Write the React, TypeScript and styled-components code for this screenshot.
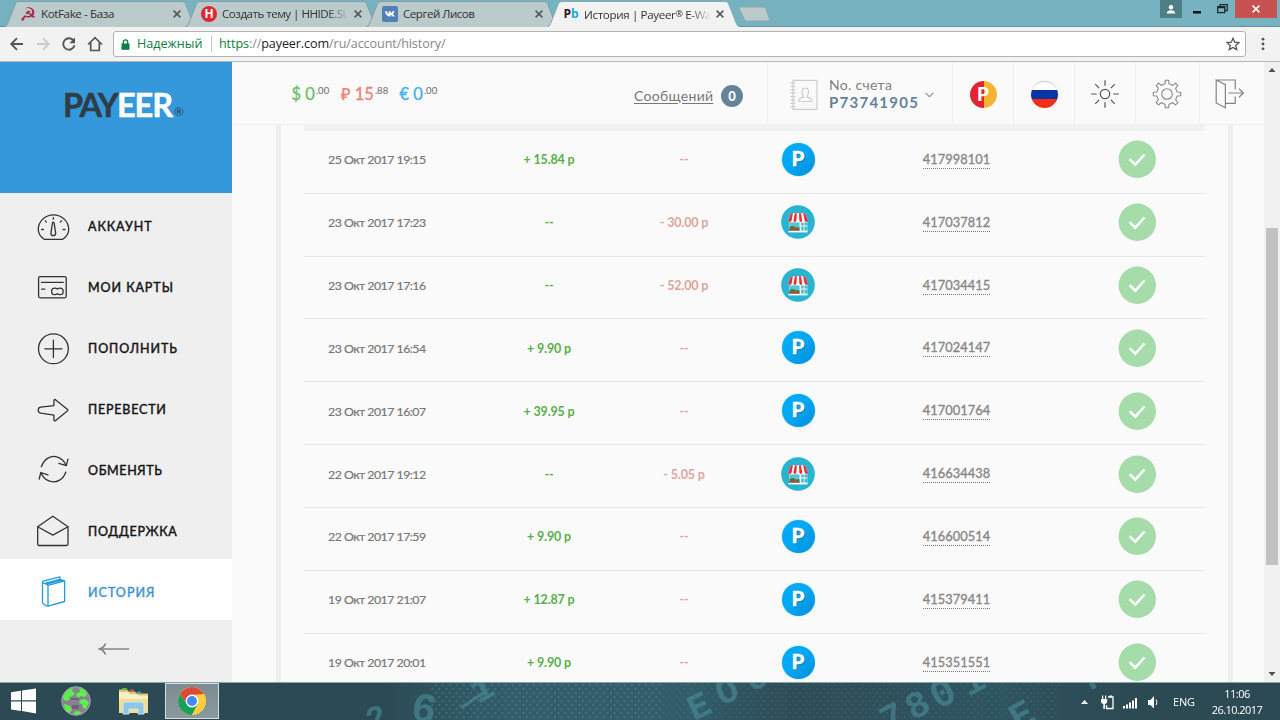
import type { ReactNode } from 'react';
import styled, { createGlobalStyle } from 'styled-components';

const GlobalStyle = createGlobalStyle`
  * { box-sizing: border-box; }
  html, body { margin: 0; padding: 0; overflow: hidden; }
  body { width: 1280px; height: 720px; background: #fafafa; }
  svg { display: block; flex: none; }
`;

const uiFont = `'Open Sans', 'Noto Sans', sans-serif`;
const siteFont = `'Lato', 'Open Sans', sans-serif`;

const Screen = styled.div`
  width: 1280px;
  height: 720px;
  display: flex;
  flex-direction: column;
  overflow: hidden;
  font-family: ${siteFont};
`;

/* ---------- browser ---------- */

const TabStrip = styled.div`
  height: 27px;
  flex: none;
  display: flex;
  align-items: flex-start;
  padding-left: 4px;
  background: #76b2c0;
  border-bottom: 1px solid #68909a;
`;

const TabBox = styled.div<{ $active?: boolean }>`
  position: relative;
  z-index: ${({ $active }) => ($active ? 2 : 1)};
  width: 193px;
  height: 27px;
  flex: none;
  margin-right: -12px;
  padding: 1px 0 0 16px;
  display: flex;
  align-items: center;
`;

const TabShape = styled.svg`
  position: absolute;
  left: 0;
  top: 0;
  z-index: -1;
`;

const TabTitle = styled.span<{ $faded?: boolean; $spacing: number }>`
  width: 126px;
  margin: 0 6px 0 5px;
  white-space: nowrap;
  font: 11.6px/16px ${uiFont};
  letter-spacing: ${({ $spacing }) => $spacing}px;
  color: #333;
  ${({ $faded }) => $faded && 'mask-image: linear-gradient(to right, #000 84%, transparent 101%);'}
`;

const TabMark = styled.span`
  font-size: 9px;
  vertical-align: 2px;
`;

const Favicon = styled.span<{ $color?: string; $bg?: string; $radius?: string; $size?: number }>`
  width: 16px;
  height: 16px;
  flex: none;
  display: flex;
  align-items: center;
  justify-content: center;
  font: bold ${({ $size = 12 }) => $size}px/16px 'Open Sans', 'DejaVu Sans', sans-serif;
  color: ${({ $color = '#fff' }) => $color};
  background: ${({ $bg = 'transparent' }) => $bg};
  border-radius: ${({ $radius = '0' }) => $radius};
`;

const PbBlue = styled.span`
  color: #1ea5dc;
`;

const NewTab = styled.svg`
  margin: 6px 0 0 10px;
`;

const WindowButtons = styled.div`
  margin-left: auto;
  margin-right: 3px;
  display: flex;
  align-items: flex-start;
`;

const WindowButton = styled.div<{ $width: number; $bg?: string }>`
  width: ${({ $width }) => $width}px;
  height: 18px;
  display: flex;
  align-items: center;
  justify-content: center;
  background: ${({ $bg = 'transparent' }) => $bg};
`;

const Toolbar = styled.div`
  height: 35px;
  flex: none;
  display: flex;
  align-items: center;
  background: #f2f2f2;
  border-bottom: 1px solid #b6b4b6;
`;

const NavButtons = styled.div`
  width: 113px;
  flex: none;
  padding-left: 9px;
  display: flex;
  gap: 10px;
`;

const AddressBar = styled.div`
  width: 1133px;
  height: 26px;
  flex: none;
  display: flex;
  align-items: center;
  padding: 0 5px 0 7px;
  background: #fff;
  border: 1px solid #b4b2b2;
  border-radius: 3px;
  font: 12.6px/18px ${uiFont};
  color: #888;
`;

const Secure = styled.span`
  width: 75px;
  margin-left: 7px;
  color: #0b8043;
  border-right: 1px solid #c4c4c4;
  height: 16px;
  line-height: 16px;
`;

const Url = styled.span`
  margin-left: 7px;
  margin-right: auto;
  letter-spacing: -0.1px;
`;

const UrlPart = styled.span<{ $color: string }>`
  color: ${({ $color }) => $color};
`;

const MenuDots = styled.svg`
  margin-left: 13px;
`;

/* ---------- site ---------- */

const Page = styled.div`
  height: 620px;
  flex: none;
  display: flex;
  background: #fafafa;
`;

const Sidebar = styled.aside`
  width: 231.5px;
  flex: none;
  background: #efefef;
`;

const Brand = styled.div`
  height: 131px;
  padding: 23px 0 0 63px;
  display: flex;
  background: #3498db;
`;

const BrandPart = styled.span<{ $color: string; $spacing: number }>`
  color: ${({ $color }) => $color};
  font: bold 32.5px/40px ${siteFont};
  -webkit-text-stroke: 0.5px;
  letter-spacing: ${({ $spacing }) => $spacing}px;
`;

const Registered = styled.span`
  margin: 20px 0 0 2px;
  font: 12px/14px ${siteFont};
  color: #2c3e50;
`;

const NavItem = styled.a<{ $active?: boolean }>`
  height: 61px;
  padding: 5px 0 0 36px;
  display: flex;
  align-items: center;
  background: ${({ $active }) => ($active ? '#fff' : 'transparent')};
  color: ${({ $active }) => ($active ? '#3d94d4' : '#151515')};
`;

const NavLabel = styled.span<{ $spacing: number }>`
  margin: 2px 0 0 18px;
  font: 12.5px/18px ${siteFont};
  -webkit-text-stroke: 0.45px;
  letter-spacing: ${({ $spacing }) => $spacing}px;
`;

const Collapse = styled.div`
  height: 58px;
  display: flex;
  align-items: center;
  justify-content: center;
  padding-right: 3px;
`;

const Main = styled.main`
  width: 1032.5px;
  flex: none;
  display: flex;
  flex-direction: column;
  overflow: hidden;
`;

const Header = styled.header`
  height: 63px;
  flex: none;
  display: flex;
  border-bottom: 1px solid #f0f0f0;
`;

const Balances = styled.div`
  width: 401.5px;
  flex: none;
  padding: 20px 0 0 60px;
  display: flex;
`;

const Balance = styled.div<{ $color: string; $width: number }>`
  width: ${({ $width }) => $width}px;
  flex: none;
  display: flex;
  white-space: nowrap;
  font: 16.5px/24px ${siteFont};
  -webkit-text-stroke: 0.35px;
  color: ${({ $color }) => $color};
`;

const Cents = styled.span`
  margin: -3px 0 0 1px;
  font-size: 9.5px;
  -webkit-text-stroke: 0.1px;
  color: #777;
`;

const Messages = styled.div`
  width: 134px;
  flex: none;
  padding: 5px 0 0 1px;
  display: flex;
  align-items: center;
`;

const MessagesLink = styled.a`
  width: 87px;
  font: 14px/20px ${siteFont};
  letter-spacing: 0.3px;
  color: #777;
  text-decoration: underline;
  text-underline-offset: 2px;
`;

const Badge = styled.span`
  width: 22px;
  height: 22px;
  border-radius: 50%;
  background: #648499;
  color: #fff;
  font: 900 13px/22px ${siteFont};
  text-align: center;
`;

const HeaderCell = styled.div<{ $width: number; $shift?: number }>`
  width: ${({ $width }) => $width}px;
  flex: none;
  border-left: 1px solid #efefef;
  display: flex;
  align-items: center;
  justify-content: center;
  padding: 2px ${({ $shift = 0 }) => $shift}px 0 0;
`;

const AccountCell = styled.div`
  width: 185px;
  flex: none;
  padding: 4px 0 0 22px;
  border-left: 1px solid #efefef;
  display: flex;
  align-items: center;
`;

const AccountText = styled.div`
  width: 96px;
  margin: -3px 0 0 11px;
  display: flex;
  flex-direction: column;
`;

const AccountLabel = styled.span`
  font: 14px/17px ${siteFont};
  letter-spacing: 0.3px;
  color: #7f7f7f;
`;

const AccountNumber = styled.span`
  font: bold 15px/18px ${siteFont};
  letter-spacing: 1.25px;
  color: #64839b;
`;

const Coin = styled.div`
  width: 27px;
  height: 27px;
  border-radius: 50%;
  background: linear-gradient(to right, #e32430 50%, #f9b233 50%);
  color: #fff;
  font: 900 19px/26px ${siteFont};
  text-align: center;
`;

const Flag = styled.div`
  width: 27px;
  height: 27px;
  border-radius: 50%;
  border-top: 1px solid #d0d0d0;
  background: linear-gradient(#fff 31%, #0736a4 31% 65%, #f52b18 65%);
  box-shadow: 0 0 1px #c8c8c8;
`;

const HistoryPanel = styled.section`
  width: 957px;
  height: 557px;
  flex: none;
  margin-left: 44.5px;
  padding: 0 23px;
  border: solid #efefef;
  border-width: 0 5px;
  overflow: hidden;
`;

const TableHead = styled.div`
  height: 6px;
  background: #f0f3f2;
`;

const Row = styled.div`
  height: 62.83px;
  display: grid;
  grid-template-columns: 177.5px 135px 135px 93px 224px 136.5px;
  align-items: center;
  padding-bottom: 5px;
  border-bottom: 1px solid #e3e6e6;
`;

const Time = styled.span`
  padding: 2px 0 0 24px;
  font: 12.3px/18px ${siteFont};
  letter-spacing: -0.5px;
  -webkit-text-stroke: 0.2px;
  color: #777;
`;

const Amount = styled.span<{ $kind: 'in' | 'out' }>`
  padding-top: 2px;
  text-align: center;
  font: bold 12.5px/18px ${siteFont};
  letter-spacing: -0.15px;
  color: ${({ $kind }) => ($kind === 'in' ? '#58b04b' : '#dfa49b')};
`;

const Center = styled.span`
  display: flex;
  justify-content: center;
`;

const Operation = styled.span`
  width: 33px;
  height: 33px;
  border-radius: 50%;
  background: linear-gradient(135deg, #03a9f4 45%, #0398e4 75%);
  box-shadow: 0 0 1px #03a9f4;
  color: #fff;
  font: 900 20.5px/31px ${siteFont};
  -webkit-text-stroke: 0.3px;
  text-align: center;
  text-shadow: 1px 1px 1px #087cba;
`;

const Id = styled.a`
  margin-top: 1px;
  font: 12.8px/17px ${siteFont};
  -webkit-text-stroke: 0.35px;
  letter-spacing: 0.1px;
  color: #888;
  border-bottom: 1px dotted #777;
`;

const Scrollbar = styled.div`
  width: 16px;
  flex: none;
  display: flex;
  flex-direction: column;
  align-items: center;
  background: #f1f1f1;
`;

const ScrollTrack = styled.div`
  flex: 1;
  padding-top: 149px;
`;

const ScrollThumb = styled.div`
  width: 12px;
  height: 337px;
  background: #c1c1c1;
`;

/* ---------- taskbar ---------- */

const Taskbar = styled.footer`
  position: relative;
  z-index: 0;
  height: 38px;
  flex: none;
  display: flex;
  background: #2c4a54;
  border-top: 1px solid #86a5a8;
  overflow: hidden;
`;

const Wallpaper = styled.svg`
  position: absolute;
  left: 0;
  top: 0;
  z-index: -1;
`;

const TaskButton = styled.div<{ $width: number; $active?: boolean; $shift?: number }>`
  width: ${({ $width }) => $width}px;
  height: 36px;
  display: flex;
  align-items: center;
  justify-content: center;
  padding-right: ${({ $shift = 0 }) => $shift}px;
  border: 1px solid ${({ $active }) => ($active ? '#d9dfe1' : 'transparent')};
  background: ${({ $active }) => ($active ? 'linear-gradient(#7d8c92, #8b999c)' : 'transparent')};
`;

const Tray = styled.div`
  margin-left: auto;
  display: flex;
  align-items: center;
  color: #fff;
  font: 11px/16px ${uiFont};
`;

const Language = styled.span`
  width: 36px;
  margin-left: 15px;
  letter-spacing: -0.2px;
`;

const Clock = styled.div`
  width: 56px;
  margin-right: 15px;
  text-align: center;
  letter-spacing: -0.55px;
`;

/* ---------- icons ---------- */

const Cross = ({ color = '#555', size = 8 }: { color?: string; size?: number }) => (
  <svg width={size} height={size} viewBox="0 0 8 8" stroke={color} strokeWidth="1.5">
    <path d="M.6.6 7.4 7.4M7.4.6.6 7.4" />
  </svg>
);

const navIcons: Record<string, ReactNode> = {
  account: (
    <>
      <path d="M8.3 31.3C4.4 28.8 2.3 25.4 2.3 21.6a15.2 14.8 0 0 1 30.4 0c0 3.8-2.1 7.2-6 9.7z" />
      <path d="M16.5 14.8q.8-1.2 1.6 0l1.6 10.5q-.3 2.4-2.4 2.4t-2.4-2.4z" />
      <path d="M17.3 9.6v1.6M9.3 13l1.1 1.1M25.3 13l-1.1 1.1M5.6 21.5h1.8M27.2 21.5H29" />
    </>
  ),
  cards: (
    <>
      <rect x="2.6" y="7.6" width="27.6" height="21.2" rx="1.5" />
      <path d="M5.5 13.4h21.8M5.6 20.2h3.2M21.4 20.1q-1-.9-2.6-.9-3.2 0-3.2 3.2t3.2 3.2q1.600 0 2.600-.9 1 .9 2.600.9 3.200 0 3.200-3.200t-3.200-3.200q-1.600 0-2.600.9z" />
    </>
  ),
  deposit: (
    <>
      <circle cx="17.4" cy="18.8" r="14.9" />
      <path d="M17.4 10.2v17.2M8.8 18.8H26" />
    </>
  ),
  transfer: (
    <path d="M4.8 16.1 17.9 14.6V9.8q.2-2 1.8-.9l11.900 9.600q.6.6 0 1.200l-11.900 9.700q-1.600 1.100-1.800-.7v-4.600L4.800 22.200Q2.200 21.600 2.200 19t2.600-2.900z" />
  ),
  exchange: (
    <>
      <path d="M5.4 14.7C8.2 6.6 15 3.2 20.8 4.8c4.6 1.2 7.6 4.2 9.5 8.9M32 7.2l-1.7 6.5-7.4-2.4" />
      <path d="M29.7 20.2c-2.800 8-9.600 10.600-15.400 9.200-4.600-1.200-7.600-4.200-9.500-8.900M3.200 27l1.600-6.500 7.200 2.300" />
    </>
  ),
  support: (
    <>
      <path d="M1.7 13.7 16.8 3.2 32 13.7V31q0 1.5-1.5 1.5H3.2q-1.5 0-1.5-1.5z" />
      <path d="m1.7 13.7 15.1 8.4L32 13.7" />
    </>
  ),
  history: (
    <path d="m12 11.3 16.6-4.500v20.700L12 32.200zM12 11.300q-2.500-2-5.500-2.400v20q2 2.700 5.500 3.300M6.500 8.900q-.5-1.600 1.400-2.100l16-4v2.600l4.700 1.400M8.600 9.300l15.100-4M10.400 10.200l15.500-4.100" />
  ),
};

const NavIcon = ({ name }: { name: string }) => (
  <svg width="34" height="36" viewBox="0 0 34 36" fill="none" stroke={name === 'history' ? '#239bdd' : '#333'} strokeWidth="1.3" strokeLinejoin="round" strokeLinecap="round">
    {navIcons[name]}
  </svg>
);

const ShopIcon = () => (
  <svg width="34" height="34" viewBox="0 0 34 34">
    <circle cx="17" cy="17" r="16.8" fill="#27b5d2" />
    <path d="M8.3 15h18v11h-18z" fill="#f5f7f7" />
    <path d="M7.4 26h19.2v1.4H7.400z" fill="#fff" />
    <path d="M8.500 17.400h10v7h-10z" fill="#58c4d6" />
    <path d="M8.500 22.200q3-2.600 6 0h4v2.400h-10z" fill="#497f43" />
    <path d="M8.200 24h10.400v1.800H8.200z" fill="#a44d3b" />
    <path d="M20.200 17.600h2.500v3h-2.500zM23.500 17.600H26v3h-2.500zM20.200 21.400h2.500v4h-2.500zM23.500 21.400H26v4h-2.500z" fill="#42bdd5" />
    <path d="M10 8.300h14l3 7q-.3 1.700-1.900 1.700H9q-1.700 0-1.900-1.700z" fill="#fff" />
    <path d="M10 8.300h1.900l-1.200 7q-.3 1.700-1.800 1.700t-1.800-1.700zM13.800 8.300h2l-.3 7q-.2 1.700-1.700 1.700t-1.300-1.700zM18 8.300h2l1.200 7q0 1.700-1.300 1.700t-1.600-1.700zM22.100 8.300H24l3 7q0 1.700-1.500 1.700t-1.900-1.700z" fill="#e6333a" />
  </svg>
);

const StatusIcon = () => (
  <svg width="38" height="38" viewBox="0 0 38 38">
    <circle cx="19.300" cy="19.300" r="18.700" fill="#a5dcaa" />
    <path d="m11.600 19.200 5.700 5.400 9.200-10.100" fill="none" stroke="#fff" strokeWidth="2.500" />
  </svg>
);

const SunIcon = () => (
  <svg width="30" height="30" viewBox="0 0 30 30" fill="none" stroke="#555" strokeWidth="1.2">
    <circle cx="15" cy="15" r="4.7" />
    <path d="M15 1.200v5.500M15 23.300v5.500M1.200 15h5.500M23.300 15h5.500M5.200 5.200l3.900 3.900M20.900 20.900l3.900 3.900M24.800 5.200l-3.900 3.900M9.100 20.900l-3.900 3.900" />
  </svg>
);

const GearIcon = () => (
  <svg width="30" height="30" viewBox="0 0 30 30" fill="none" stroke="#888" strokeWidth="1.1" strokeLinejoin="round">
    <circle cx="15" cy="15" r="5.3" />
    {[0, 45, 90, 135, 180, 225, 270, 315].map((angle) => (
      <path key={angle} d="M11.100 5.600 13 4.800l.3-3.500h3.400l.3 3.500 1.900.8" transform={`rotate(${angle} 15 15)`} />
    ))}
  </svg>
);

const ExitIcon = () => (
  <svg width="30" height="32" viewBox="0 0 30 32" fill="none" stroke="#858585" strokeWidth="1.2">
    <path d="M1.200 2h19v9.500M20.200 18.500v6.800H11M1.200 2l9.200 4.700v23L1.200 25zM13.500 15h14.800M24 10.800l4.400 4.200-4.400 4.200" />
  </svg>
);

const AddressBook = () => (
  <svg width="28" height="32" viewBox="0 0 28 32" fill="none" stroke="#cdcdcd" strokeWidth="1.2">
    <rect x="3" y="1.4" width="24" height="29" />
    {[4, 7.4, 10.8, 14.2, 17.6, 21, 24.4, 27.8].map((y) => (
      <path key={y} d={`M.4 ${y}h5`} />
    ))}
    <path d="M8.600 22.500q-.3-3.400 5.100-4.300 0-1.300-1-2.300-2.200-6.700 2.600-6.700t2.600 6.700q-1 1-1 2.300 5.400.9 5.100 4.300z" />
  </svg>
);

const WindowsLogo = () => (
  <svg width="26" height="26" viewBox="0 0 26 26" fill="#fff">
    <path d="M0 4.200 10 2.800v9.500H0zM11 2.600 25 .4v11.900H11zM0 13.400h10v9.500L0 21.600zM11 13.400h14v12L11 23z" />
  </svg>
);

const GlobeIcon = () => (
  <svg width="30" height="30" viewBox="0 0 30 30">
    <circle cx="15" cy="15" r="14.300" fill="#89818f" stroke="#a5a8ad" />
    <path d="M4 7q3-4 8-5l-1 3 3 2-2 3-4 1 1 2-3 2-3-1-1-3zM18 2q6 1 8 6l-2 3-5-1-1 2-3-2 1-3 3-1zM19 14l5-1 4 3-3 7-3-1-1-4-3-1zM3 18l6 2 2 4-3 3q-5-3-5-9zM15 25l6 1-4 3-5-1z" fill="#5cf04f" />
    <path d="M10 12h8v2h-8zM12 18h7M11 19h7v4h-7z" fill="#6c6474" />
  </svg>
);

const FolderIcon = () => (
  <svg width="31" height="28" viewBox="0 0 31 28">
    <path d="M1 2.500h8l2 2h6l2 2h11V26H1z" fill="#dfc66e" />
    <path d="M4 1h5v2H4z" fill="#5bb441" />
    <path d="M12 2.500h4v2h-4z" fill="#d65a41" />
    <path d="M19 4.700h4v1.800h-4z" fill="#4ba6d5" />
    <path d="M1 8h29v18H1z" fill="#f1dc93" />
    <path d="M1 8V5h9l2 2h7l2 2h9v3H1z" fill="#fbf0c4" />
    <path d="M5 27v-9q0-3 3-3h15q3 0 3 3v9h-6v-5h-9v5z" fill="#8ec6e8" stroke="#c7e6f5" />
  </svg>
);

const ChromeIcon = () => (
  <svg width="28" height="28" viewBox="0 0 28 28">
    <circle cx="14" cy="14" r="14" fill="#ffcd40" />
    <path d="M1.900 7A14 14 0 0 1 26.100 7L14 8 8.800 17z" fill="#dc4a3d" />
    <path d="M1.900 7A14 14 0 0 0 14 28l5.600-11L14 20 8.800 17z" fill="#16a05d" />
    <path d="M26.100 7.200A14 14 0 0 1 14 28l6-11V8z" fill="#ffcd40" />
    <circle cx="14" cy="14" r="6.400" fill="#fff" />
    <circle cx="14" cy="14" r="5" fill="#4587f3" />
  </svg>
);

const wallpaperGlyphs: [string, number, number, number, number][] = [
  ['6', 409, 36, 42, 12],
  ['2', 372, 49, 34, -25],
  ['/', 458, 23, 34, 28],
  ['1', 478, 21, 36, -28],
  ['E', 694, 38, 36, -25],
  ['O', 722, 23, 36, -25],
  ['C', 752, 9, 32, -25],
  ['7', 888, 50, 38, -28],
  ['8', 913, 38, 38, -28],
  ['0', 938, 27, 40, -28],
  ['1', 968, 14, 38, -28],
  ['E', 1018, 48, 38, -30],
  ['F', 1090, 8, 34, -28],
];

const TaskbarWallpaper = () => (
  <Wallpaper width="1280" height="38" aria-hidden>
    <defs>
      <pattern id="mesh" width="7" height="8" patternUnits="userSpaceOnUse">
        <circle cx="1.8" cy="2" r="1.2" fill="#5da2ac" opacity=".4" />
        <circle cx="5.3" cy="6" r="1.2" fill="#5da2ac" opacity=".4" />
      </pattern>
      <linearGradient id="glow">
        <stop offset=".3" stopColor="#346774" stopOpacity="0" />
        <stop offset=".4" stopColor="#33626e" stopOpacity=".8" />
        <stop offset=".54" stopColor="#33626e" stopOpacity=".8" />
        <stop offset=".62" stopColor="#305361" stopOpacity=".3" />
        <stop offset=".78" stopColor="#31606d" stopOpacity=".5" />
        <stop offset=".9" stopColor="#2c4a54" stopOpacity="0" />
      </linearGradient>
      <filter id="soft">
        <feGaussianBlur stdDeviation=".7" />
      </filter>
    </defs>
    <rect width="1280" height="38" fill="url(#glow)" />
    <rect x="430" width="230" height="38" fill="url(#mesh)" opacity=".7" />
    <rect x="660" width="400" height="38" fill="url(#mesh)" opacity=".3" />
    <g fill="#4f94a1" fontFamily="Liberation Mono" fontWeight="bold" opacity=".55" filter="url(#soft)">
      {wallpaperGlyphs.map(([glyph, x, y, size, angle]) => (
        <text key={x} fontSize={size} transform={`translate(${x} ${y}) rotate(${angle})`}>
          {glyph}
        </text>
      ))}
    </g>
  </Wallpaper>
);

/* ---------- data ---------- */

const menu = [
  { icon: 'account', label: 'АККАУНТ', spacing: 0.95 },
  { icon: 'cards', label: 'МОИ КАРТЫ', spacing: 0.95 },
  { icon: 'deposit', label: 'ПОПОЛНИТЬ', spacing: 0.95 },
  { icon: 'transfer', label: 'ПЕРЕВЕСТИ', spacing: 0.8 },
  { icon: 'exchange', label: 'ОБМЕНЯТЬ', spacing: 0.65 },
  { icon: 'support', label: 'ПОДДЕРЖКА', spacing: 0.75 },
  { icon: 'history', label: 'ИСТОРИЯ', spacing: 1 },
];

const operations = [
  { time: '25 Окт 2017 19:15', income: '+ 15.84 р', id: '417998101' },
  { time: '23 Окт 2017 17:23', outcome: '- 30.00 р', id: '417037812' },
  { time: '23 Окт 2017 17:16', outcome: '- 52.00 р', id: '417034415' },
  { time: '23 Окт 2017 16:54', income: '+ 9.90 р', id: '417024147' },
  { time: '23 Окт 2017 16:07', income: '+ 39.95 р', id: '417001764' },
  { time: '22 Окт 2017 19:12', outcome: '- 5.05 р', id: '416634438' },
  { time: '22 Окт 2017 17:59', income: '+ 9.90 р', id: '416600514' },
  { time: '19 Окт 2017 21:07', income: '+ 12.87 р', id: '415379411' },
  { time: '19 Окт 2017 20:01', income: '+ 9.90 р', id: '415351551' },
];

interface TabProps {
  title: ReactNode;
  icon: ReactNode;
  active?: boolean;
  faded?: boolean;
  spacing?: number;
}

function Tab({ title, icon, active, faded, spacing = -0.3 }: TabProps) {
  return (
    <TabBox $active={active}>
      <TabShape width="193" height="27">
        <path
          d="M0 27Q2.500 26.500 3.500 24L11.500 3.500Q12.500 1.500 15 1.500H178Q180.500 1.500 181.500 3.500L189.500 24Q190.500 26.500 193 27"
          fill={active ? '#f2f2f2' : '#bbcaca'}
          stroke={active ? '#8aabb1' : '#839fa5'}
        />
      </TabShape>
      {icon}
      <TabTitle $faded={faded} $spacing={spacing}>{title}</TabTitle>
      <Cross />
    </TabBox>
  );
}

function Browser() {
  return (
    <>
      <TabStrip>
        <Tab title="KotFake - База" spacing={-0.4} icon={<Favicon $color="#a9264b" $size={19}>☭</Favicon>} />
        <Tab title="Создать тему | HHIDE.SU" faded spacing={-0.5} icon={<Favicon $bg="#df2731" $radius="50%">H</Favicon>} />
        <Tab
          title="Сергей Лисов"
          spacing={-0.5}
          icon={
            <svg width="16" height="16" viewBox="0 0 16 16">
              <rect width="16" height="16" rx="2" fill="#5181b0" />
              <path d="M3 5.300h2q.3 2.200 1.600 3.300V5.300h2v2q1.300-.6 1.900-2h2q-.4 1.500-1.800 2.600 1.600 1 2.200 2.700h-2.200q-.7-1.400-2.100-1.800v1.800Q4 10.700 3 5.300z" fill="#fff" />
            </svg>
          }
        />
        <Tab
          title={<>История | Payeer<TabMark>®</TabMark> E-Wa</>}
          active
          faded
          spacing={-0.35}
          icon={<Favicon $color="#222">P<PbBlue>b</PbBlue></Favicon>}
        />
        <NewTab width="34" height="17">
          <path d="M2.500 1H25q2 0 3 2l3.500 10q.5 2-1.500 2H9q-2 0-3-2L1.500 3Q1 1 2.500 1z" fill="#bbcaca" stroke="#8ba8ad" />
        </NewTab>
        <WindowButtons>
          <WindowButton $width={22} $bg="#4e7f87">
            <svg width="8" height="9" viewBox="0 0 8 9" fill="#fff"><circle cx="4" cy="2.300" r="2.200" /><path d="M0 8.500V7q1-1.800 4-1.800T8 7v1.500z" /></svg>
          </WindowButton>
          <WindowButton $width={30}>
            <svg width="8" height="9"><path d="M0 6h8v2.500H0z" fill="#111" /></svg>
          </WindowButton>
          <WindowButton $width={20}>
            <svg width="11" height="10" fill="none" stroke="#1c2a2d" strokeWidth="1.300"><path d="M.7 2.700h7v6h-7zM.7 3.600h7M3 2.500V.7h7.200v6H8" /></svg>
          </WindowButton>
          <WindowButton $width={3} />
          <WindowButton $width={42} $bg="#c75050"><Cross color="#fff" /></WindowButton>
        </WindowButtons>
      </TabStrip>
      <Toolbar>
        <NavButtons>
          <svg width="16" height="16" fill="none" stroke="#555" strokeWidth="1.800"><path d="M14 8H2.500M8 2.200 2.200 8 8 13.800" /></svg>
          <svg width="16" height="16" fill="none" stroke="#ccc" strokeWidth="1.800"><path d="M2 8h11.500M8 2.200 13.800 8 8 13.800" /></svg>
          <svg width="16" height="16"><path d="M12.800 5A5.700 5.700 0 1 0 13.500 9.200" fill="none" stroke="#555" strokeWidth="1.900" /><path d="M14 1.500v5.800H8.300z" fill="#555" /></svg>
          <svg width="16" height="16" fill="none" stroke="#555" strokeWidth="1.700"><path d="M1 8.500 8 1.700l7 6.800M3.700 6.500v8h8.600v-8" /></svg>
        </NavButtons>
        <AddressBar>
          <svg width="9" height="11" viewBox="0 0 9 11"><path d="M.5 4.500h8v6.300h-8z" fill="#0b8043" /><path d="M2.300 5V3q0-2.200 2.200-2.200T6.700 3v2" fill="none" stroke="#0b8043" strokeWidth="1.300" /></svg>
          <Secure>Надежный</Secure>
          <Url>
            <UrlPart $color="#0b8043">https</UrlPart>://<UrlPart $color="#222">payeer.com</UrlPart>/ru/account/history/
          </Url>
          <svg width="14" height="14" viewBox="0 0 14 14"><path d="m7 1.300 1.700 3.900 4.200.4-3.200 2.800 1 4.200L7 10.400l-3.700 2.200 1-4.200L1.100 5.600l4.200-.4z" fill="none" stroke="#555" strokeWidth="1.300" /></svg>
        </AddressBar>
        <MenuDots width="8" height="14" fill="#555"><circle cx="4" cy="2.200" r="1.400" /><circle cx="4" cy="7" r="1.400" /><circle cx="4" cy="11.800" r="1.400" /></MenuDots>
      </Toolbar>
    </>
  );
}

function SiteHeader() {
  return (
    <Header>
      <Balances>
        <Balance $color="#6cc067" $width={49}>$ 0<Cents>.00</Cents></Balance>
        <Balance $color="#ee8277" $width={59}>₽ 15<Cents>.88</Cents></Balance>
        <Balance $color="#3db3ec" $width={50}>€ 0<Cents>.00</Cents></Balance>
      </Balances>
      <Messages>
        <MessagesLink>Сообщений</MessagesLink>
        <Badge>0</Badge>
      </Messages>
      <AccountCell>
        <AddressBook />
        <AccountText>
          <AccountLabel>No. счета</AccountLabel>
          <AccountNumber>P73741905</AccountNumber>
        </AccountText>
        <svg width="9" height="6" fill="none" stroke="#8b979f" strokeWidth="1.200"><path d="m.6.800 3.900 3.900L8.400.800" /></svg>
      </AccountCell>
      <HeaderCell $width={61}><Coin>P</Coin></HeaderCell>
      <HeaderCell $width={61}><Flag /></HeaderCell>
      <HeaderCell $width={61}><SunIcon /></HeaderCell>
      <HeaderCell $width={64} $shift={2}><GearIcon /></HeaderCell>
      <HeaderCell $width={64} $shift={3}><ExitIcon /></HeaderCell>
    </Header>
  );
}

export default function App() {
  return (
    <Screen>
      <GlobalStyle />
      <Browser />
      <Page>
        <Sidebar>
          <Brand>
            <BrandPart $color="#2f3d48" $spacing={-1.9}>PAY</BrandPart>
            <BrandPart $color="#fff" $spacing={-1.1}>EER</BrandPart>
            <Registered>®</Registered>
          </Brand>
          {menu.map(({ icon, label, spacing }) => (
            <NavItem key={icon} $active={icon === 'history'}>
              <NavIcon name={icon} />
              <NavLabel $spacing={spacing}>{label}</NavLabel>
            </NavItem>
          ))}
          <Collapse>
            <svg width="32" height="14" fill="none" stroke="#858585"><path d="M3 7h28" strokeWidth="1.500" /><path d="M7.500 1.500Q6 5.500 1.500 7 6 8.500 7.500 12.500" strokeWidth="1.800" /></svg>
          </Collapse>
        </Sidebar>
        <Main>
          <SiteHeader />
          <HistoryPanel>
            <TableHead />
            {operations.map(({ time, income, outcome, id }) => (
              <Row key={id}>
                <Time>{time}</Time>
                <Amount $kind="in">{income ?? '--'}</Amount>
                <Amount $kind="out">{outcome ?? '--'}</Amount>
                <Center>{income ? <Operation>P</Operation> : <ShopIcon />}</Center>
                <Center><Id>{id}</Id></Center>
                <Center><StatusIcon /></Center>
              </Row>
            ))}
          </HistoryPanel>
        </Main>
        <Scrollbar>
          <svg width="16" height="17"><path d="m8 6 3.500 4h-7z" fill="#505050" /></svg>
          <ScrollTrack><ScrollThumb /></ScrollTrack>
          <svg width="16" height="17"><path d="m8 11 3.500-4h-7z" fill="#505050" /></svg>
        </Scrollbar>
      </Page>
      <Taskbar>
        <TaskbarWallpaper />
        <TaskButton $width={47}><WindowsLogo /></TaskButton>
        <TaskButton $width={58}><GlobeIcon /></TaskButton>
        <TaskButton $width={60} $shift={3}><FolderIcon /></TaskButton>
        <TaskButton $width={54} $active><ChromeIcon /></TaskButton>
        <Tray>
          <svg width="79" height="20" fill="#fff">
            <path d="M2 12h7l-3.500-4z" />
            <path d="M22 4v3M23 3.500h1.200V7H23zM26 3.500h1.200V7H26zM22 7h6.200v2.500q0 2-2.300 2.500v5h-1.600v-5Q22 11.500 22 9.500z" />
            <path d="M29 5h5v11.500h-6.500V13" fill="none" stroke="#fff" strokeWidth="1.300" />
            <path d="M30.500 3.500h2.500v1.500h-2.500z" />
            <path d="M44 14h2v2.500h-2zM47 12.500h2v4h-2zM50 10.500h2v6h-2zM53 8.500h2v8h-2zM56 6h2v10.500h-2z" />
            <path d="M69 8h2.500L75 4v12.500L71.500 13H69z" />
            <path d="M77 7.500q2 2.800 0 5.500" fill="none" stroke="#fff" />
          </svg>
          <Language>ENG</Language>
          <Clock>11:06<br />26.10.2017</Clock>
        </Tray>
      </Taskbar>
    </Screen>
  );
}
